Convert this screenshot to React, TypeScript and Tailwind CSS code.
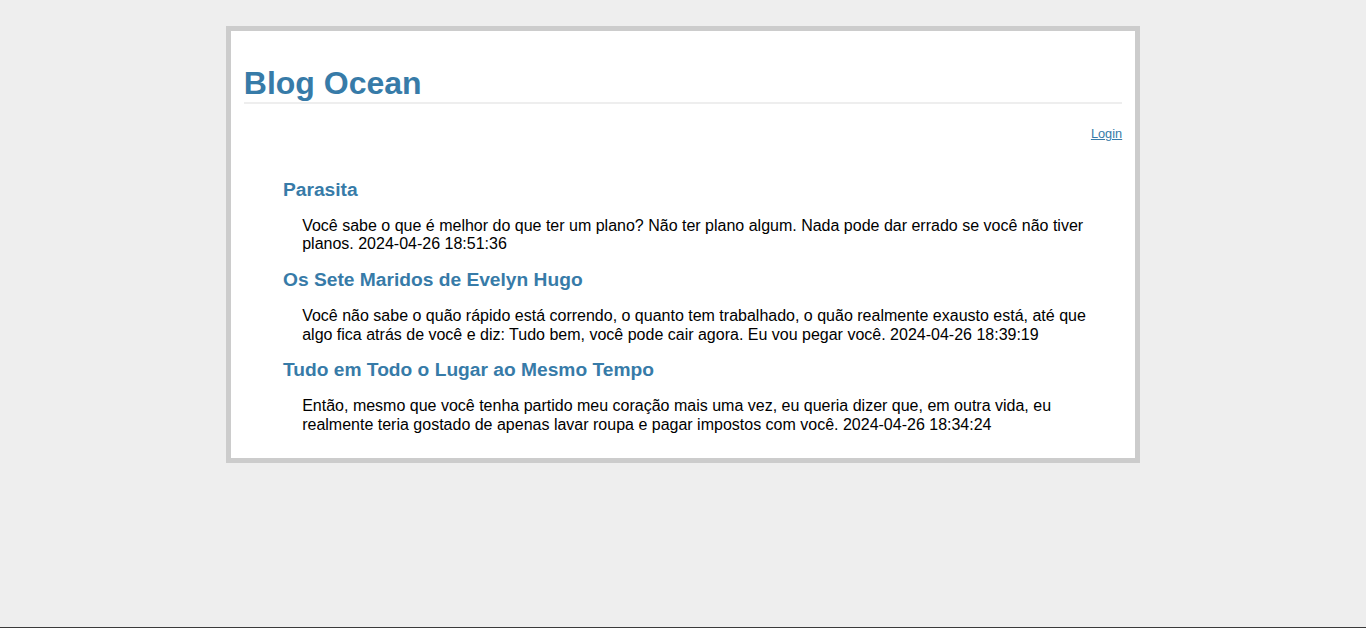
import React from "react";

const entries = [
  {
    title: "Parasita",
    text: "Você sabe o que é melhor do que ter um plano? Não ter plano algum. Nada pode dar errado se você não tiver planos.",
    date: "2024-04-26 18:51:36",
  },
  {
    title: "Os Sete Maridos de Evelyn Hugo",
    text: "Você não sabe o quão rápido está correndo, o quanto tem trabalhado, o quão realmente exausto está, até que algo fica atrás de você e diz: Tudo bem, você pode cair agora. Eu vou pegar você.",
    date: "2024-04-26 18:39:19",
  },
  {
    title: "Tudo em Todo o Lugar ao Mesmo Tempo",
    text: "Então, mesmo que você tenha partido meu coração mais uma vez, eu queria dizer que, em outra vida, eu realmente teria gostado de apenas lavar roupa e pagar impostos com você.",
    date: "2024-04-26 18:34:24",
  },
];

export default function App() {
  return (
    <div className="min-h-screen bg-[#eeeeee] pt-[26px] font-['Liberation_Sans',Arial,sans-serif]">
      {/* page box */}
      <div className="mx-auto w-[914px] border-[5px] border-[#cccccc] bg-white px-[12.8px] pt-[12.8px] pb-[24px]">
        <h1 className="mt-[21px] border-b-2 border-[#eeeeee] text-[32px] leading-[1.15] font-bold text-[#377ba8]">
          Blog Ocean
        </h1>

        <div className="mt-[23px] text-right text-[12.8px] leading-[1.15]">
          <a href="#" className="text-[#377ba8] underline">
            Login
          </a>
        </div>

        <ul className="mt-[37.6px] flex flex-col gap-[15.3px]">
          {entries.map((e) => (
            <li key={e.title} className="pl-[39.2px] pr-[19.2px]">
              <h2 className="text-[19.2px] leading-[1.15] font-bold text-[#377ba8]">{e.title}</h2>
              <p className="mt-[16px] ml-[19.2px] text-[16px] leading-[1.15] text-black">
                {e.text} {e.date}
              </p>
            </li>
          ))}
        </ul>
      </div>

      <div className="fixed bottom-0 left-0 right-0 h-px bg-[#3a3a3a]" />
    </div>
  );
}
